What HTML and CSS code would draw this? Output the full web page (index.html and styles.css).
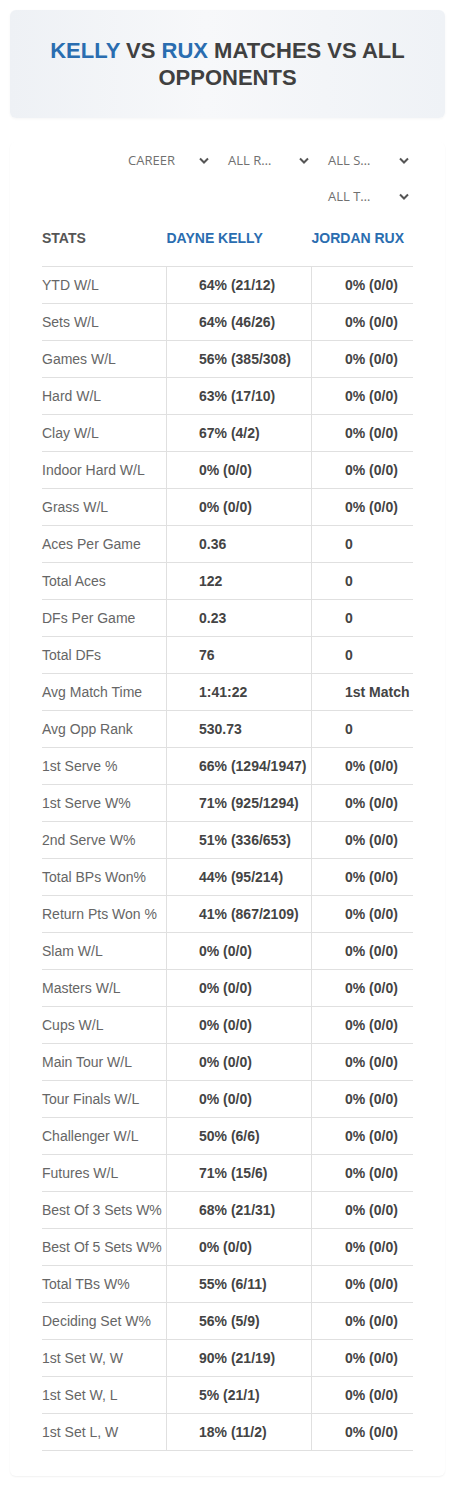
FILE: index.html
```html
<!DOCTYPE html>
<html lang="en">
<head>
    <meta charset="UTF-8">
    <meta name="viewport" content="width=device-width, initial-scale=1.0">
    <title>Kelly vs Rux</title>
    <link rel="stylesheet" href="styles.css">
</head>
<body>
    <header class="title-card">
        <h1><span class="blue">Kelly</span> vs <span class="blue">Rux</span> Matches vs All Opponents</h1>
    </header>
    <main class="stats-card">
        <div class="filters">
            <div class="select"><span>CAREER</span><svg viewBox="0 0 10 6"><polyline points="1,1 5,5 9,1"/></svg></div>
            <div class="select"><span>ALL R…</span><svg viewBox="0 0 10 6"><polyline points="1,1 5,5 9,1"/></svg></div>
            <div class="select"><span>ALL S…</span><svg viewBox="0 0 10 6"><polyline points="1,1 5,5 9,1"/></svg></div>
            <div class="select"><span>ALL T…</span><svg viewBox="0 0 10 6"><polyline points="1,1 5,5 9,1"/></svg></div>
        </div>
        <table class="stats">
            <thead>
                <tr>
                    <th>Stats</th>
                    <th class="player">Dayne Kelly</th>
                    <th class="player">Jordan Rux</th>
                </tr>
            </thead>
            <tbody id="rows">
                <tr><td>YTD W/L</td><td>64% (21/12)</td><td>0% (0/0)</td></tr>
                <tr><td>Sets W/L</td><td>64% (46/26)</td><td>0% (0/0)</td></tr>
                <tr><td>Games W/L</td><td>56% (385/308)</td><td>0% (0/0)</td></tr>
                <tr><td>Hard W/L</td><td>63% (17/10)</td><td>0% (0/0)</td></tr>
                <tr><td>Clay W/L</td><td>67% (4/2)</td><td>0% (0/0)</td></tr>
                <tr><td>Indoor Hard W/L</td><td>0% (0/0)</td><td>0% (0/0)</td></tr>
                <tr><td>Grass W/L</td><td>0% (0/0)</td><td>0% (0/0)</td></tr>
                <tr><td>Aces Per Game</td><td>0.36</td><td>0</td></tr>
                <tr><td>Total Aces</td><td>122</td><td>0</td></tr>
                <tr><td>DFs Per Game</td><td>0.23</td><td>0</td></tr>
                <tr><td>Total DFs</td><td>76</td><td>0</td></tr>
                <tr><td>Avg Match Time</td><td>1:41:22</td><td>1st Match</td></tr>
                <tr><td>Avg Opp Rank</td><td>530.73</td><td>0</td></tr>
                <tr><td>1st Serve %</td><td>66% (1294/1947)</td><td>0% (0/0)</td></tr>
                <tr><td>1st Serve W%</td><td>71% (925/1294)</td><td>0% (0/0)</td></tr>
                <tr><td>2nd Serve W%</td><td>51% (336/653)</td><td>0% (0/0)</td></tr>
                <tr><td>Total BPs Won%</td><td>44% (95/214)</td><td>0% (0/0)</td></tr>
                <tr><td>Return Pts Won %</td><td>41% (867/2109)</td><td>0% (0/0)</td></tr>
                <tr><td>Slam W/L</td><td>0% (0/0)</td><td>0% (0/0)</td></tr>
                <tr><td>Masters W/L</td><td>0% (0/0)</td><td>0% (0/0)</td></tr>
                <tr><td>Cups W/L</td><td>0% (0/0)</td><td>0% (0/0)</td></tr>
                <tr><td>Main Tour W/L</td><td>0% (0/0)</td><td>0% (0/0)</td></tr>
                <tr><td>Tour Finals W/L</td><td>0% (0/0)</td><td>0% (0/0)</td></tr>
                <tr><td>Challenger W/L</td><td>50% (6/6)</td><td>0% (0/0)</td></tr>
                <tr><td>Futures W/L</td><td>71% (15/6)</td><td>0% (0/0)</td></tr>
                <tr><td>Best Of 3 Sets W%</td><td>68% (21/31)</td><td>0% (0/0)</td></tr>
                <tr><td>Best Of 5 Sets W%</td><td>0% (0/0)</td><td>0% (0/0)</td></tr>
                <tr><td>Total TBs W%</td><td>55% (6/11)</td><td>0% (0/0)</td></tr>
                <tr><td>Deciding Set W%</td><td>56% (5/9)</td><td>0% (0/0)</td></tr>
                <tr><td>1st Set W, W</td><td>90% (21/19)</td><td>0% (0/0)</td></tr>
                <tr><td>1st Set W, L</td><td>5% (21/1)</td><td>0% (0/0)</td></tr>
                <tr><td>1st Set L, W</td><td>18% (11/2)</td><td>0% (0/0)</td></tr>
            </tbody>
        </table>
    </main>
</body>
</html>
```

FILE: styles.css
```css
body {
    margin: 0;
    padding: 10px;
    font-family: 'Liberation Sans', Arial, sans-serif;
    background-color: white;
    color: #444;
}

.title-card {
    height: 108px;
    display: flex;
    align-items: center;
    justify-content: center;
    border-radius: 6px;
    background: linear-gradient(90deg, #eef1f5 0%, #f7f8fa 45%, #eff2f6 100%);
    box-shadow: 0 1px 3px rgba(0, 0, 0, 0.04);
}

.title-card h1 {
    margin: 0;
    padding: 0 25px;
    font-size: 22px;
    line-height: 27px;
    text-transform: uppercase;
    text-align: center;
    color: #404040;
}

.blue {
    color: #2a6db0;
}

.stats-card {
    margin-top: 24px;
    padding: 0 32px 25px;
    border-radius: 6px;
    box-shadow: 0 1px 2px rgba(0, 0, 0, 0.06);
}

.filters {
    display: flex;
    flex-wrap: wrap;
    justify-content: flex-end;
    column-gap: 5px;
}

.select {
    width: 95px;
    height: 36px;
    box-sizing: border-box;
    padding: 0 4px 0 10px;
    display: flex;
    align-items: center;
    justify-content: space-between;
    font-family: 'Open Sans', 'Noto Sans', sans-serif;
    font-size: 13px;
    color: #707070;
}

.select svg {
    width: 10px;
    height: 7px;
    fill: none;
    stroke: #555;
    stroke-width: 2;
}

.stats {
    width: 100%;
    border-collapse: collapse;
    font-size: 14px;
}

.stats th {
    height: 48px;
    padding: 0 0 4px;
    text-align: left;
    text-transform: uppercase;
    color: #555;
    font-weight: bold;
}

.stats th.player {
    color: #2a6db0;
}

.stats td {
    height: 36px;
    padding: 0 0 0 33px;
    border-top: 1px solid #e0e0e0;
    border-bottom: 1px solid #e0e0e0;
    font-weight: bold;
    color: #444;
    white-space: nowrap;
}

.stats td:first-child {
    width: 124px;
    padding: 0;
    font-weight: normal;
    color: #666;
    border-right: 1px solid #e0e0e0;
}

.stats td:nth-child(2) {
    width: 112px;
    padding-left: 32px;
    border-right: 1px solid #e0e0e0;
}
```
